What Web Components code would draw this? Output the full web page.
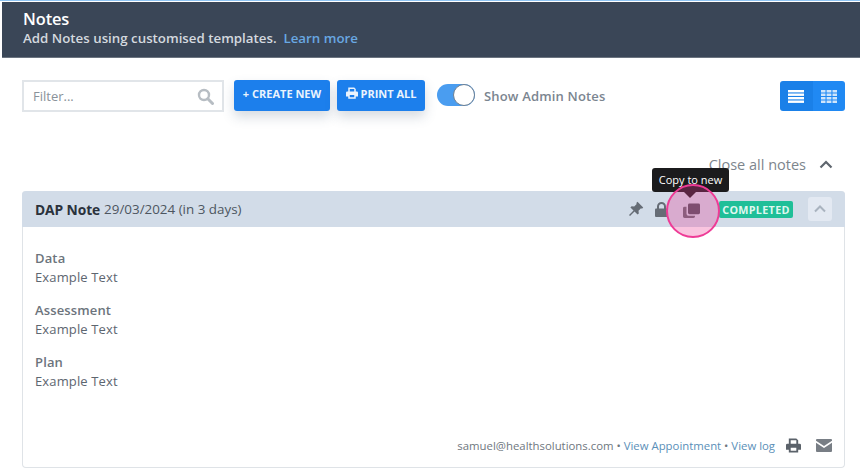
<!DOCTYPE html>
<html><head><meta charset="utf-8"><style>
html,body{margin:0;padding:0;background:#fff;}
body{width:860px;height:469px;overflow:hidden;font-family:"Open Sans",sans-serif;color:#4a5560;}
</style></head><body>
<template id="t-page"><style>
:host{display:block;width:860px;height:469px;overflow:hidden;position:relative;border-top:1px solid #8fc4f2;box-sizing:border-box;}
.content{display:flex;flex-direction:column;padding:0 15px 0 22px;}
</style>
<slot name="banner"></slot>
<div class="content"><slot></slot></div></template>

<template id="t-banner"><style>
:host{display:block;margin:1px 0 0 2px;height:55px;box-sizing:border-box;background:#3a4657;padding:7px 21px 0;color:#fff;box-shadow:0 1px 0 #6b7480;}
.t{font-size:16.4px;line-height:20px;font-weight:600;letter-spacing:-.1px;}
.s{font-size:13.3px;line-height:18px;font-weight:600;color:#d4d9df;white-space:pre;}
a{color:#69a8e2;text-decoration:none;}
</style><div class="t">Notes</div><div class="s">Add Notes using customised templates.  <a>Learn more</a></div></template>

<template id="t-toolbar"><style>
:host{display:flex;align-items:flex-start;margin-top:23px;height:32px;}
.filter{width:202px;height:32px;box-sizing:border-box;border:2px solid #e1e5e9;display:flex;align-items:center;justify-content:space-between;padding:0 8px 0 9px;font-size:13px;color:#8a929a;margin-right:10px;}
.filter svg{display:block;}
.tog{width:38px;height:22px;border-radius:11px;background:#4a9df0;position:relative;margin:4px 9px 0 12px;box-sizing:border-box;}
.tog i{position:absolute;right:0;top:0;width:22px;height:22px;box-sizing:border-box;border-radius:50%;background:#fff;border:1px solid #6d7f92;}
.lab{font-size:13px;font-weight:600;color:#7b8590;line-height:18px;margin-top:7px;letter-spacing:.17px;}
.sp{flex:1}
.views{display:flex;height:30px;margin-top:1px;border-radius:3px;overflow:hidden;}
.views div{width:32.5px;display:flex;align-items:center;justify-content:center;background:#1a80e8;}
.views div+div{background:#2089f3;}
</style>
<div class="filter"><span>Filter...</span><svg width="17" height="17" viewBox="0 0 17 17" fill="none" stroke="#b7bdc3" stroke-width="2.4"><circle cx="7" cy="7" r="5"/><path d="M10.8 10.8 15.5 15.5" stroke-linecap="round" stroke-width="3"/></svg></div>
<slot></slot>
<div class="tog"><i></i></div><span class="lab">Show Admin Notes</span><span class="sp"></span>
<div class="views"><div><svg width="16" height="13" viewBox="0 0 16 13" fill="#fff"><rect width="16" height="2.4"/><rect y="3.5" width="16" height="2.4"/><rect y="7" width="16" height="2.4"/><rect y="10.5" width="16" height="2.4"/></svg></div><div><svg width="16" height="13" viewBox="0 0 16 13" fill="#cfe5fb"><path d="M0 0h4.500v2.400H0zM5.600 0h4.800v2.400H5.600zM11.500 0H16v2.400h-4.500zM0 3.500h4.500v2.400H0zM5.600 3.500h4.800v2.400H5.600zM11.500 3.500H16v2.400h-4.500zM0 7h4.500v2.400H0zM5.600 7h4.800v2.400H5.600zM11.500 7H16v2.400h-4.500zM0 10.500h4.500V13H0zM5.600 10.500h4.800V13H5.600zM11.500 10.500H16V13h-4.500z"/></svg></div></div></template>

<template id="t-btn"><style>
:host{display:flex;align-items:center;justify-content:center;gap:3px;height:31px;box-sizing:border-box;padding-bottom:5px;background:#1c7fec;border-radius:3px;color:#eaf3fd;font-size:11px;font-weight:700;box-shadow:0 6px 12px rgba(70,90,120,.22);margin-right:7px;white-space:nowrap;}
</style><slot></slot></template>

<template id="t-closeall"><style>
:host{display:flex;justify-content:flex-end;align-items:center;height:20px;margin-top:42px;padding-right:12px;font-size:14.5px;color:#7d858d;gap:13px;}
</style><span>Close all notes</span><svg width="14" height="9" viewBox="0 0 14 9" fill="none" stroke="#5f666e" stroke-width="2.200"><path d="M1.500 7.500 7 2l5.500 5.500"/></svg></template>

<template id="t-card"><style>
:host{display:block;margin-top:17px;height:277px;box-sizing:border-box;border:1px solid #dfe3e7;border-top:0;border-radius:4px;}
header{height:36px;margin:0 -1px;background:#d2dce8;border-radius:4px 4px 0 0;display:flex;align-items:center;padding:0 13px 0 13px;font-size:13.4px;color:#4d5660;}
b{font-size:13.8px;font-weight:700;color:#2a323c;margin-right:4px;letter-spacing:-.1px;}
.sp{flex:1}
.ic{display:flex;align-items:center;}
.badge{background:#1fbf98;color:#dff7ef;font-size:10.8px;font-weight:700;border-radius:2px;height:17px;line-height:17px;width:74px;text-align:center;margin-left:51px;letter-spacing:.3px;}
.up{width:24px;height:24px;margin-left:15px;background:#e3e9f2;border-radius:3px;display:flex;align-items:center;justify-content:center;}
main{padding:22px 12px 0;height:211px;box-sizing:border-box;}
footer{display:flex;align-items:center;justify-content:flex-end;padding-right:12px;font-size:11.36px;color:#6f7780;white-space:pre;}
a{color:#5a8fb8;}
.f1{margin-left:11px;}
.f2{margin-left:15px;}
</style>
<header><b>DAP Note</b><span>29/03/2024 (in 3 days)</span><span class="sp"></span>
<span class="ic"><svg width="16" height="16" viewBox="0 0 16 16" fill="#656c75"><path d="M9.500.8 15.200 6.500 14 7.700 13 7.300 10.500 9.800 10.800 12.400 9.600 13.600 6.500 10.500 2 15 1 14 5.500 9.500 2.400 6.400 3.600 5.200 6.200 5.500 8.700 3 8.300 2z"/></svg></span>
<span class="ic" style="margin-left:11px"><svg width="13" height="15" viewBox="0 0 13 15"><path d="M3 7V4.500a3.500 3.500 0 0 1 7 0V7" fill="none" stroke="#656c75" stroke-width="2"/><rect y="6.500" width="13" height="8.500" rx="1" fill="#656c75"/></svg></span>
<span class="badge">COMPLETED</span>
<span class="up"><svg width="12" height="8" viewBox="0 0 12 8" fill="none" stroke="#a9b3bf" stroke-width="2"><path d="M1 6.500 6 1.500l5 5"/></svg></span></header>
<main><slot></slot></main>
<footer><span>samuel@healthsolutions.com • <a>View Appointment</a> • <a>View log</a></span>
<svg class="f1" width="15" height="15" viewBox="0 0 16 15" fill="#5b626a"><path d="M3 0h8l2 2v4h-2V2H5v4H3zM1.500 5.500h13A1.500 1.500 0 0 1 16 7v5h-3v3H3v-3H0V7a1.500 1.500 0 0 1 1.500-1.500zM5 10v3h6v-3z"/></svg>
<svg class="f2" width="16" height="13" viewBox="0 0 16 12" preserveAspectRatio="none" fill="#787e85"><path d="M1 0h14a1 1 0 0 1 1 1v.6L8 6.500 0 1.600V1a1 1 0 0 1 1-1zM0 3.500 8 8.400l8-4.900V11a1 1 0 0 1-1 1H1a1 1 0 0 1-1-1z"/></svg></footer>
</template>

<template id="t-field"><style>
:host{display:block;font-size:13px;color:#5d6670;margin-bottom:13.500px;letter-spacing:.14px;}
.l{font-weight:600;color:#6c747c;line-height:19.250px;}
.v{line-height:19.250px;}
</style><div class="l"><slot name="label"></slot></div><div class="v"><slot></slot></div></template>

<template id="t-overlay"><style>
:host{position:absolute;left:652px;top:167px;width:80px;height:71px;display:block;}
.tip{position:absolute;left:0;top:0;width:77px;height:24px;background:#1b1b1d;color:#fff;font-size:11px;line-height:24px;text-align:center;border-radius:3px;}
.arrow{position:absolute;left:32px;top:24px;width:0;height:0;border:6px solid transparent;border-top-color:#1b1b1d;border-bottom:0;}
.dot{position:absolute;left:14px;top:16px;width:54px;height:54px;box-sizing:border-box;border-radius:50%;background:rgba(235,60,150,.3);border:2px solid #ee3b96;}
.copy{position:absolute;left:31px;top:35px;}
</style><div class="tip">Copy to new</div><div class="arrow"></div>
<svg class="copy" width="17" height="15" viewBox="0 0 17 16" preserveAspectRatio="none"><rect x="5" y="0.500" width="12" height="11.500" rx="1.500" fill="#4f5560"/><path d="M3.500 4H1.500A1.500 1.500 0 0 0 0 5.500v9A1.500 1.500 0 0 0 1.500 16h9a1.500 1.500 0 0 0 1.500-1.500V13.500H5.500a2 2 0 0 1-2-2z" fill="#656c75"/></svg>
<div class="dot"></div></template>

<script>
for (const [tag,id] of [['np-page','t-page'],['np-banner','t-banner'],['np-toolbar','t-toolbar'],['np-btn','t-btn'],['np-closeall','t-closeall'],['np-card','t-card'],['np-field','t-field'],['np-overlay','t-overlay']]) {
  customElements.define(tag, class extends HTMLElement {
    constructor(){super();this.attachShadow({mode:'open'}).appendChild(document.getElementById(id).content.cloneNode(true));}
  });
}
</script>
<np-page>
  <np-banner slot="banner"></np-banner>
  <np-toolbar>
    <np-btn style="width:96px;margin-right:7px">+ CREATE NEW</np-btn>
    <np-btn style="width:88px;margin-right:0"><svg width="12" height="12" viewBox="0 0 16 15" fill="#eaf3fd"><path d="M3 0h8l2 2v4h-2V2H5v4H3zM1.500 5.500h13A1.500 1.500 0 0 1 16 7v5h-3v3H3v-3H0V7a1.500 1.500 0 0 1 1.500-1.500zM5 10v3h6v-3z"/></svg>PRINT ALL</np-btn>
  </np-toolbar>
  <np-closeall></np-closeall>
  <np-card>
    <np-field><span slot="label">Data</span>Example Text</np-field>
    <np-field><span slot="label">Assessment</span>Example Text</np-field>
    <np-field><span slot="label">Plan</span>Example Text</np-field>
  </np-card>
  <np-overlay></np-overlay>
</np-page>
</body></html>
